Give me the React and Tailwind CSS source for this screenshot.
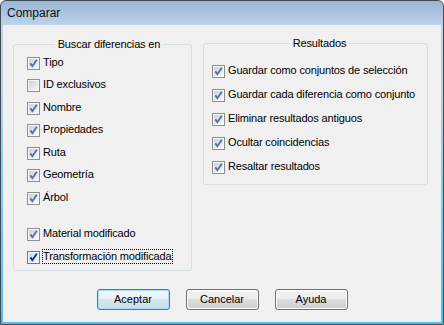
import React from "react";

const font = { fontFamily: '"Liberation Sans", Arial, sans-serif' };

function CheckBox({ focused }) {
  const g = focused ? "cbf" : "cbn";
  return (
    <svg width="13" height="13" viewBox="0 0 13 13" className="shrink-0">
      <defs>
        <linearGradient id={g} x1="0" y1="0" x2="1" y2="1">
          <stop offset="0" stopColor={focused ? "#bcdcf0" : "#cdd0d5"} />
          <stop offset="1" stopColor={focused ? "#f1f9fe" : "#f8f8f8"} />
        </linearGradient>
      </defs>
      <rect x="0.5" y="0.5" width="12" height="12" fill={focused ? "#eef7fd" : "#f6f6f6"} stroke={focused ? "#5a7fa3" : "#8e8f8f"} />
      <rect x="2" y="2" width="9" height="9" fill={`url(#${g})`} />
      <path
        d="M3.4 6.4 L5.4 9.2 L9.8 2.8"
        fill="none"
        stroke={focused ? "#1b2f83" : "#5670a8"}
        strokeWidth="1.9"
        strokeLinejoin="miter"
      />
    </svg>
  );
}

function Row({ label, checked = true, focused, h }) {
  return (
    <div className={`flex items-center gap-[3px] ${h}`}>
      {checked ? (
        <CheckBox focused={focused} />
      ) : (
        <svg width="13" height="13" viewBox="0 0 13 13" className="shrink-0">
          <defs>
            <linearGradient id="cbe" x1="0" y1="0" x2="1" y2="1">
              <stop offset="0" stopColor="#cdd0d5" />
              <stop offset="1" stopColor="#f8f8f8" />
            </linearGradient>
          </defs>
          <rect x="0.5" y="0.5" width="12" height="12" fill="#f6f6f6" stroke="#8e8f8f" />
          <rect x="2" y="2" width="9" height="9" fill="url(#cbe)" />
        </svg>
      )}
      <span
        className={`mb-[2px] leading-[13px] tracking-[-0.15px] whitespace-nowrap ${
          focused ? "outline outline-1 outline-dotted outline-black" : ""
        }`}
      >
        {label}
      </span>
    </div>
  );
}

function Button({ children, primary }) {
  return (
    <button
      className={`w-[73px] h-[21px] rounded-[3px] border text-[11px] text-black ${
        primary
          ? "border-[#3c7fb1] bg-[linear-gradient(to_bottom,#f2f8fc_0%,#e8f1f7_50%,#d6e7f2_50%,#c8deec_100%)] shadow-[inset_0_0_0_1px_#a9dcf5]"
          : "border-[#707070] bg-[linear-gradient(to_bottom,#f2f2f2_0%,#ebebeb_50%,#dddddd_50%,#cfcfcf_100%)] shadow-[inset_0_0_0_1px_#fcfcfc]"
      }`}
      style={font}
    >
      {children}
    </button>
  );
}

export default function App() {
  const left = ["Tipo", "ID exclusivos", "Nombre", "Propiedades", "Ruta", "Geometría", "Árbol"];
  const right = [
    "Guardar como conjuntos de selección",
    "Guardar cada diferencia como conjunto",
    "Eliminar resultados antiguos",
    "Ocultar coincidencias",
    "Resaltar resultados",
  ];

  return (
    <div
      className="w-[444px] h-[325px] flex flex-col border border-[#414b57] rounded-t-[6px] overflow-hidden bg-[linear-gradient(to_bottom,#9bb6d4_0px,#bcd3eb_24px,#b2d3ec_90px,#46c0ee_100%)] text-[11px] text-black"
      style={font}
    >
      <div className="h-[24px] shrink-0 flex items-center pl-[6px] text-[12px] text-[#111]">
        Comparar
      </div>

      <div className="flex-1 mx-[2px] mb-[2px] bg-[#f0f0f0] flex flex-col">
        <div className="flex items-start pt-[11px] pl-[10px] gap-[11px]">
          <fieldset className="mt-[1px] w-[179px] h-[234px] border border-[#d5dfe5] rounded-[3px] pl-[13px] pt-[1px]">
            <legend className="mx-auto px-[3px] leading-[14px] tracking-[-0.15px]">Buscar diferencias en</legend>
            {left.map((l) => (
              <Row key={l} label={l} checked={l !== "ID exclusivos"} h="h-[22.5px]" />
            ))}
            <div className="h-[14px]" />
            <Row label="Material modificado" h="h-[22.5px]" />
            <Row label="Transformación modificada" focused h="h-[22.5px]" />
          </fieldset>

          <fieldset className="w-[225px] h-[149px] border border-[#d5dfe5] rounded-[3px] pl-[8px] pt-[9px]">
            <legend className="mx-auto px-[3px] leading-[14px] tracking-[-0.15px]">Resultados</legend>
            {right.map((l) => (
              <Row key={l} label={l} h="h-[24px]" />
            ))}
          </fieldset>
        </div>

        <div className="flex justify-center gap-[16px] mt-[18px]">
          <Button primary>Aceptar</Button>
          <Button>Cancelar</Button>
          <Button>Ayuda</Button>
        </div>
      </div>
    </div>
  );
}
